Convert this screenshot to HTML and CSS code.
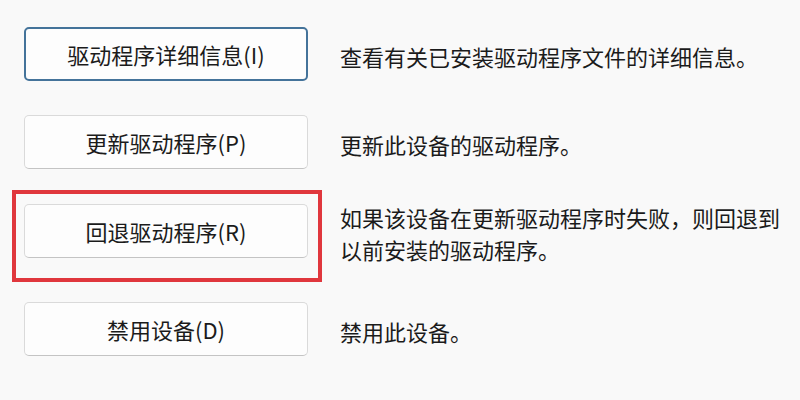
FILE: index.html
```html
<!DOCTYPE html>
<html lang="zh-CN">
  <head>
    <meta charset="UTF-8" />
    <meta name="viewport" content="width=device-width, initial-scale=1.0" />
    <title>驱动程序</title>
    <link rel="stylesheet" href="styles.css">
  </head>
  <body>
    <div class="driver-panel">
      <div class="driver-row row-details">
        <div class="btn-cell">
          <button type="button" class="driver-btn focused">驱动程序详细信息(I)</button>
        </div>
        <p class="driver-desc">查看有关已安装驱动程序文件的详细信息。</p>
      </div>

      <div class="driver-row row-update">
        <div class="btn-cell">
          <button type="button" class="driver-btn">更新驱动程序(P)</button>
        </div>
        <p class="driver-desc">更新此设备的驱动程序。</p>
      </div>

      <div class="driver-row row-rollback">
        <div class="btn-cell highlight">
          <button type="button" class="driver-btn">回退驱动程序(R)</button>
        </div>
        <p class="driver-desc">如果该设备在更新驱动程序时失败，则回退到以前安装的驱动程序。</p>
      </div>

      <div class="driver-row row-disable">
        <div class="btn-cell">
          <button type="button" class="driver-btn">禁用设备(D)</button>
        </div>
        <p class="driver-desc">禁用此设备。</p>
      </div>
    </div>
  </body>
</html>
```

FILE: styles.css
```css
body {
  font-family: "Noto Sans CJK SC", "Microsoft YaHei", sans-serif;
  background-color: #f9f9f9;
  color: #1b1b1b;
  margin: 0;
  padding: 0;
}

.driver-panel {
  display: flex;
  flex-direction: column;
  padding: 27px 0 0 24px;
}

.driver-row {
  display: flex;
  align-items: center;
  gap: 32px;
}

.row-update {
  margin-top: 34px;
}

/* taller row (two-line text), so less margin to keep the button in place */
.row-rollback {
  margin-top: 28px;
}

.row-disable {
  margin-top: 37px;
}

.btn-cell {
  position: relative;
  flex: 0 0 284px;
}

.driver-btn {
  display: block;
  width: 284px;
  height: 54px;
  background-color: #fdfdfd;
  border: 1px solid #dadada;
  border-bottom-color: #c4c4c4;
  border-radius: 5px;
  font-family: inherit;
  font-size: 22px;
  color: #1b1b1b;
  padding: 0;
  cursor: pointer;
}

.driver-btn.focused {
  border: 2px solid #44739a;
}

/* red annotation frame around the rollback button */
.highlight::after {
  content: "";
  position: absolute;
  top: -14px;
  left: -12px;
  right: -14px;
  bottom: -24px;
  border: 4px solid #e0373d;
  pointer-events: none;
}

.driver-desc {
  margin: 0;
  padding-top: 4px;
  width: 450px;
  font-size: 22px;
  line-height: 32px;
  color: #1b1b1b;
}
```
